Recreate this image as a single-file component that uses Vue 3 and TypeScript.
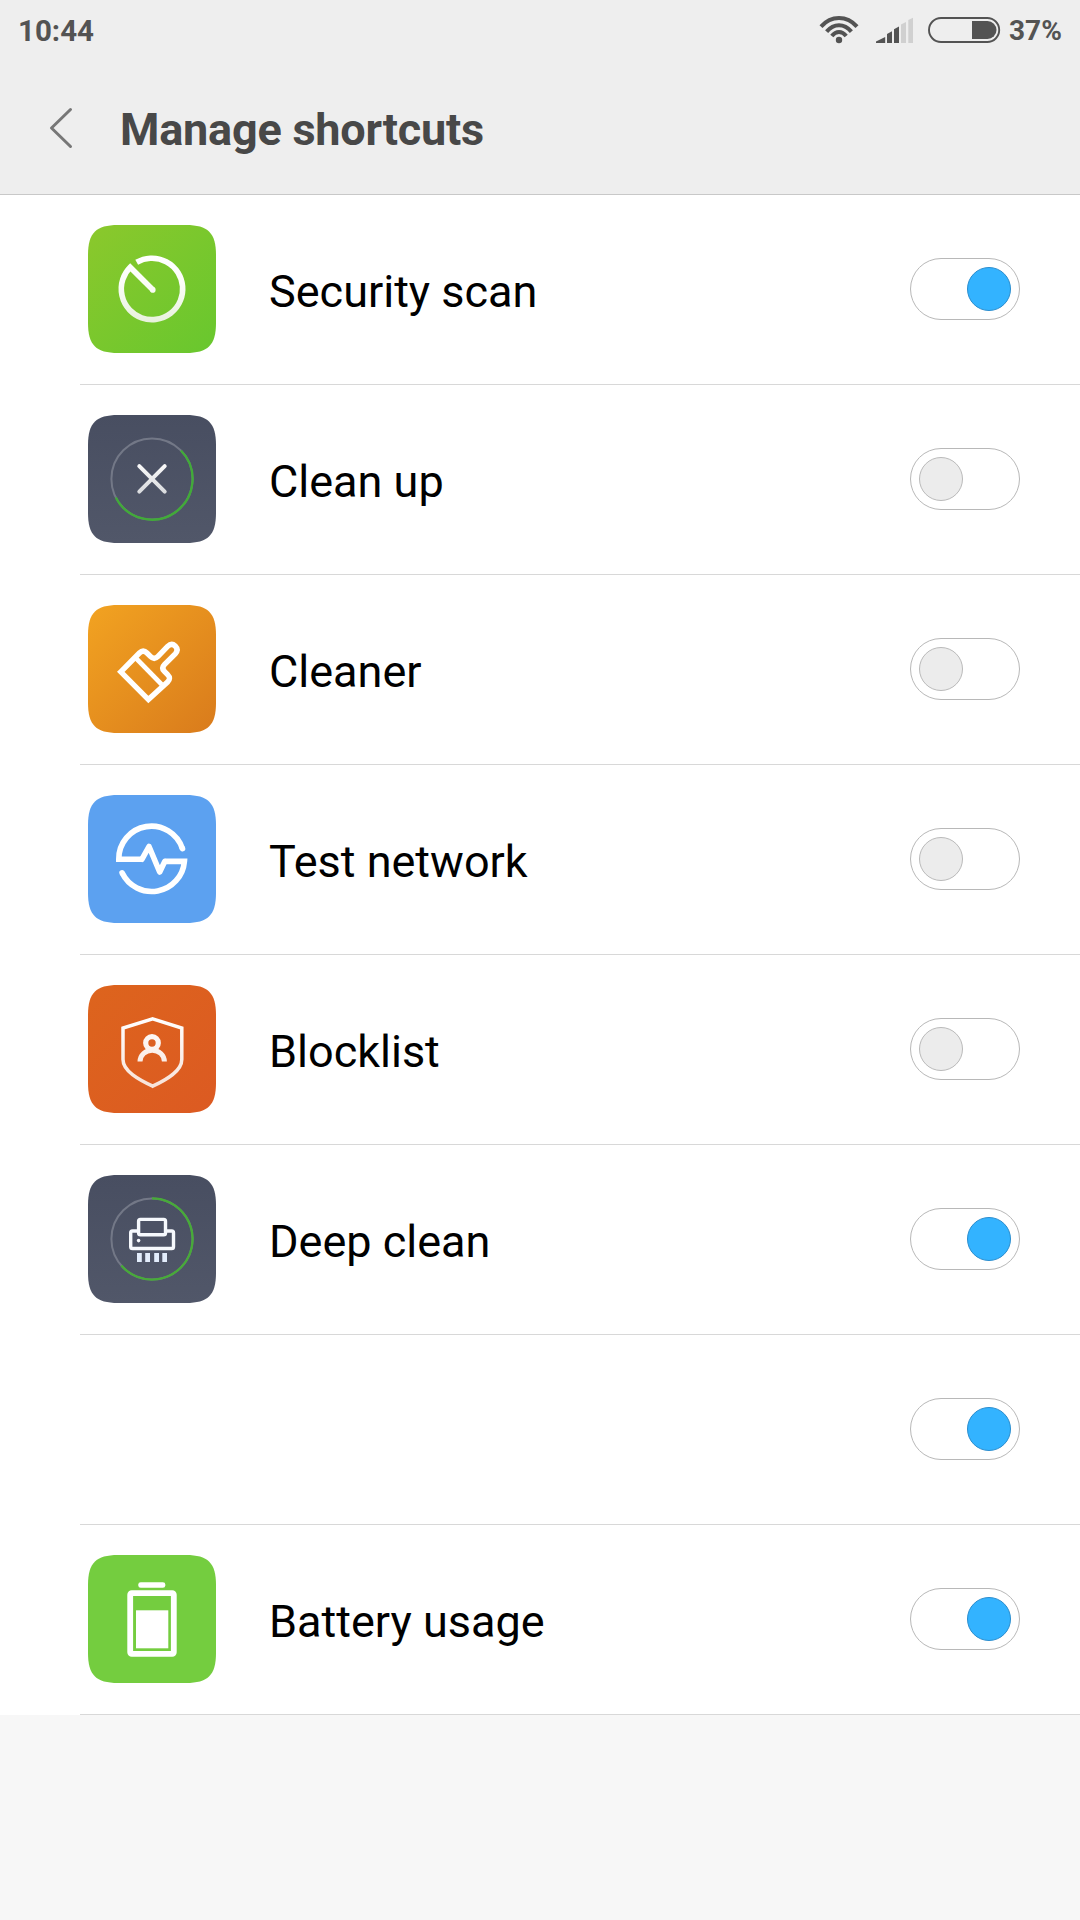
<script setup lang="ts">
import { ref } from 'vue'

type IconName = 'scan' | 'cleanup' | 'cleaner' | 'network' | 'blocklist' | 'deep' | 'battery'

interface Shortcut {
  id: string
  label: string
  icon: IconName | null
  enabled: boolean
}

const shortcuts = ref<Shortcut[]>([
  { id: 'scan', label: 'Security scan', icon: 'scan', enabled: true },
  { id: 'cleanup', label: 'Clean up', icon: 'cleanup', enabled: false },
  { id: 'cleaner', label: 'Cleaner', icon: 'cleaner', enabled: false },
  { id: 'network', label: 'Test network', icon: 'network', enabled: false },
  { id: 'blocklist', label: 'Blocklist', icon: 'blocklist', enabled: false },
  { id: 'deep', label: 'Deep clean', icon: 'deep', enabled: true },
  { id: 'blank', label: '', icon: null, enabled: true },
  { id: 'battery', label: 'Battery usage', icon: 'battery', enabled: true },
])

const tileShape =
  'M0 30C0 8 8 0 30 0H98C120 0 128 8 128 30V98C128 120 120 128 98 128H30C8 128 0 120 0 98Z'

const tileFill: Record<IconName, string> = {
  scan: 'url(#tile-scan)',
  cleanup: 'url(#tile-slate)',
  cleaner: 'url(#tile-cleaner)',
  network: '#5ca1f0',
  blocklist: 'url(#tile-blocklist)',
  deep: 'url(#tile-slate)',
  battery: '#74cd3f',
}
</script>

<template>
  <div class="screen">
    <svg class="defs" width="0" height="0" aria-hidden="true">
      <defs>
        <linearGradient id="tile-scan" x1="0" y1="0" x2="1" y2="1">
          <stop offset="0" stop-color="#8bc82c" />
          <stop offset="1" stop-color="#68c72e" />
        </linearGradient>
        <linearGradient id="tile-slate" x1="0" y1="0" x2="0" y2="1">
          <stop offset="0" stop-color="#484e61" />
          <stop offset="1" stop-color="#515769" />
        </linearGradient>
        <linearGradient id="tile-cleaner" x1="0" y1="0" x2="1" y2="1">
          <stop offset="0" stop-color="#f2a321" />
          <stop offset="1" stop-color="#d97b1c" />
        </linearGradient>
        <linearGradient id="tile-blocklist" x1="0" y1="0" x2="1" y2="1">
          <stop offset="0" stop-color="#dd641d" />
          <stop offset="1" stop-color="#dc5a22" />
        </linearGradient>
        <linearGradient id="ink-scan" gradientUnits="userSpaceOnUse" x1="0" y1="30" x2="0" y2="98">
          <stop offset="0" stop-color="#fff" />
          <stop offset="0.4" stop-color="#fbfdf8" />
          <stop offset="1" stop-color="#e7f1dd" />
        </linearGradient>
        <linearGradient id="ink-cross" gradientUnits="userSpaceOnUse" x1="0" y1="49" x2="0" y2="79">
          <stop offset="0" stop-color="#fafafa" />
          <stop offset="1" stop-color="#d8dadd" />
        </linearGradient>
        <linearGradient id="ink-shield" gradientUnits="userSpaceOnUse" x1="0" y1="32" x2="0" y2="103">
          <stop offset="0" stop-color="#fff" />
          <stop offset="1" stop-color="#f7e2d8" />
        </linearGradient>
      </defs>
    </svg>

    <header class="header">
      <div class="status">
        <span class="clock">10:44</span>
        <svg class="indicators" width="186" height="50" viewBox="816 0 186 50">
          <g fill="none" stroke="#535353" stroke-width="4">
            <path d="M821 26.6Q828.6 18 839 18T857 26.6" />
            <path d="M826.6 31.6Q832 25.2 839 25.2T851.4 31.6" />
            <path d="M831.8 36Q835 32 839 32T846.2 36" />
          </g>
          <circle cx="839" cy="40" r="3.2" fill="#535353" />
          <g fill="#535353">
            <path d="M876 43V41.5L885.2 37V43Z" />
            <path d="M887 43V34L892 31.3V43Z" />
            <path d="M894 43V29.2L899 26.6V43Z" />
          </g>
          <g fill="#d0d0d0">
            <path d="M901 43V24.4L906 22V43Z" />
            <path d="M908.3 43V20L913 17.7V43Z" />
          </g>
          <rect x="929" y="18" width="70.2" height="24" rx="12" fill="none" stroke="#535353" stroke-width="1.9" />
          <path d="M972 21H987.5A9 9 0 0 1 987.5 39H972Z" fill="#535353" />
        </svg>
        <span class="percent">37%</span>
      </div>
      <div class="title-bar">
        <svg class="back" width="30" height="44" viewBox="0 0 30 44">
          <path d="M24.5 3.5L5.5 22L24.5 40.5" />
        </svg>
        <h1 class="title">Manage shortcuts</h1>
      </div>
    </header>

    <main class="list">
      <div v-for="item in shortcuts" :key="item.id" class="row">
        <div class="icon">
          <svg v-if="item.icon" width="128" height="128" viewBox="0 0 128 128">
            <path :d="tileShape" :fill="tileFill[item.icon]" />

            <g v-if="item.icon === 'scan'">
              <path
                d="M48.7 37.3A30.7 30.7 0 1 1 42.2 42.3L65 65.1"
                fill="none"
                stroke="url(#ink-scan)"
                stroke-width="5.6"
              />
              <circle cx="64.8" cy="64.9" r="2.8" fill="#f8fbf4" />
            </g>

            <g v-if="item.icon === 'cleanup'" fill="none">
              <circle cx="64" cy="64" r="40.6" stroke="#737887" stroke-width="2" />
              <path d="M92.9 35.5A40.6 40.6 0 1 1 27.8 82.4" stroke="#41ab38" stroke-width="2.3" />
              <path
                d="M51.3 51.2L76.7 76.6M76.7 51.2L51.3 76.6"
                stroke="url(#ink-cross)"
                stroke-width="4"
                stroke-linecap="round"
              />
            </g>

            <g v-if="item.icon === 'cleaner'" fill="none" stroke="#fff" stroke-width="5.4">
              <path
                d="M32.8 66.8L51.4 48Q55.2 44.2 59 48L62.4 51.4Q66.2 55.2 70 51.4L79.6 41.4Q83.6 37.6 87.2 41Q91 44.8 87.2 48.8L76.4 59.6Q73 63 76.4 66.4L79.6 69.6Q83.4 73.4 79.6 77L60.4 94.6Z"
              />
              <path d="M48.4 53.6L73.6 79.4" stroke-width="4.8" />
            </g>

            <g v-if="item.icon === 'network'" fill="none" stroke="#fff" stroke-width="5.6">
              <path d="M94.4 53.7A32.6 32.6 0 0 0 30.8 64.2H54" />
              <path d="M76.8 66.4H96.4A32.8 32.8 0 0 1 34.2 78" />
              <path
                d="M54 64.2L61 51.5L71.7 77L76.8 66.4"
                stroke-linecap="round"
                stroke-linejoin="round"
              />
              <path d="M94.5 53.7L94.4 53.4M34.2 78L34.1 77.8" stroke-linecap="round" />
            </g>

            <g v-if="item.icon === 'blocklist'" fill="none" stroke="url(#ink-shield)">
              <path
                d="M64.7 33.8L93.8 43V74.5C93.8 86 79 94.5 64.7 101.2C50.4 94.5 35 86 35 74.5V43Z"
                stroke-width="3.5"
              />
              <circle cx="64" cy="58" r="6.3" stroke-width="5.2" />
              <path d="M52 76.6A12.2 11.4 0 0 1 76.4 76.6" stroke-width="5" />
            </g>

            <g v-if="item.icon === 'deep'" fill="none">
              <circle cx="64" cy="64" r="40.6" stroke="#737887" stroke-width="2" />
              <path d="M64 23.4A40.6 40.6 0 1 1 33.3 90.6" stroke="#47ab38" stroke-width="2.3" />
              <g stroke="#f6f9fd" stroke-width="3.4">
                <rect x="42.7" y="56" width="42.8" height="17.5" rx="1.8" />
                <rect x="50.6" y="44.4" width="26.9" height="15.4" rx="1.8" fill="#4c5265" />
              </g>
              <circle cx="50.6" cy="65.6" r="1.8" fill="#f6f9fd" />
              <path d="M49 78h4.8v9H49zM57.2 78h4.8v9h-4.8zM66.2 78H71v9h-4.8zM74.3 78h4.7v9h-4.7z" fill="#e3edfc" />
            </g>

            <g v-if="item.icon === 'battery'">
              <rect x="50.3" y="27.2" width="27" height="5.6" rx="2.4" fill="#fff" />
              <rect x="42.2" y="38.2" width="43.6" height="60.6" rx="1.6" fill="none" stroke="#fff" stroke-width="5.8" />
              <rect x="48" y="55.3" width="32.3" height="38" fill="#fff" />
            </g>
          </svg>
        </div>
        <span class="label">{{ item.label }}</span>
        <button
          class="toggle"
          :class="{ on: item.enabled }"
          role="switch"
          :aria-checked="item.enabled"
          @click="item.enabled = !item.enabled"
        >
          <span class="knob"></span>
        </button>
      </div>
    </main>
  </div>
</template>

<style>
body {
  background: #f7f7f7;
}
</style>

<style scoped>
.screen {
  width: 1080px;
  height: 1920px;
  overflow: hidden;
  background: #f7f7f7;
  font-family: Roboto, "Liberation Sans", sans-serif;
}
.defs {
  position: absolute;
}
.header {
  box-sizing: border-box;
  height: 195px;
  background: #eeeeee;
  border-bottom: 1px solid #c8c8c8;
}
.status {
  display: flex;
  height: 60px;
  color: #535353;
  font-weight: 700;
}
.clock {
  flex: 1;
  margin-left: 18px;
  font-size: 29.5px;
  line-height: 62px;
}
.indicators {
  flex: none;
}
.percent {
  width: 71px;
  margin-left: 7px;
  font-size: 28px;
  line-height: 62px;
}
.title-bar {
  display: flex;
  align-items: center;
  height: 136px;
  padding-left: 46px;
}
.back {
  flex: none;
  fill: none;
  stroke: #777;
  stroke-width: 3;
  stroke-linecap: round;
  stroke-linejoin: round;
}
.title {
  margin: 4px 0 0 44px;
  font-size: 45px;
  line-height: 60px;
  font-weight: 700;
  letter-spacing: -0.22px;
  color: #484848;
}
.list {
  background: #fff;
}
.row {
  display: flex;
  align-items: center;
  box-sizing: border-box;
  height: 190px;
  padding: 0 60px 2px 88px;
  background: linear-gradient(#d8d8d8, #d8d8d8) 80px 100% / 1000px 1px no-repeat;
}
.icon {
  flex: none;
  width: 128px;
  height: 128px;
}
.icon svg {
  display: block;
}
.label {
  flex: 1;
  margin-left: 53px;
  padding-top: 6px;
  font-size: 45px;
  line-height: 60px;
  color: #000;
}
.toggle {
  display: flex;
  align-items: center;
  flex: none;
  box-sizing: border-box;
  width: 110px;
  height: 62px;
  padding: 0 8px;
  border: 1px solid #b8b8b8;
  border-radius: 31px;
  background: #fff;
}
.knob {
  box-sizing: border-box;
  width: 44px;
  height: 44px;
  border: 1px solid #bababa;
  border-radius: 50%;
  background: #ececec;
}
.toggle.on {
  justify-content: flex-end;
}
.toggle.on .knob {
  border-color: #2a8dce;
  background: #33b3ff;
}
</style>
